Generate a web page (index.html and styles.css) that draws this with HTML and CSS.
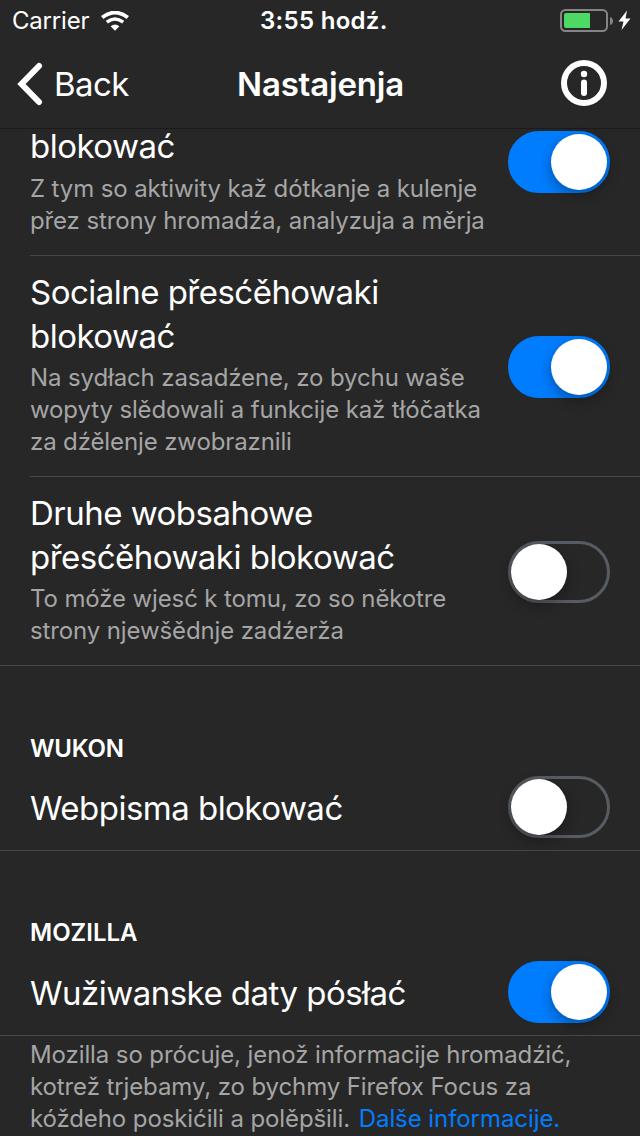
FILE: index.html
```html
<!DOCTYPE html>
<html lang="hsb">
<head>
<meta charset="utf-8">
<title>Nastajenja</title>
<link rel="stylesheet" href="styles.css">
</head>
<body>
<header class="top">
  <div class="status">
    <div class="carrier"><span class="carrier-name">Carrier</span>
      <svg class="wifi" width="28" height="20" viewBox="0 0 28 20" fill="none" stroke="#fff"><path d="M1.200 6.600Q14-3.400 26.800 6.600" stroke-width="3.800"/><path d="M5.800 11.200Q14 4.800 22.200 11.200" stroke-width="3.400"/><path d="M9.600 15.300Q14 11.700 18.400 15.300L14 19.800Z" fill="#fff" stroke="none"/></svg>
    </div>
    <span class="clock">3:55 hodź.</span>
    <svg class="battery" width="72" height="24" viewBox="0 0 72 24"><rect x="1" y="1" width="46" height="21" rx="4.500" fill="none" stroke="#858585" stroke-width="2"/><path d="M50 8q3 1 3 4t-3 4z" fill="#858585"/><path d="M6 4H30V19H6Q4 19 4 17V6Q4 4 6 4Z" fill="#4cd964"/><path d="M67 1.500L58.500 12.500h5l-2 8.500 9-11.500h-5z" fill="#fff"/></svg>
  </div>
  <nav class="nav">
    <div class="back"><svg width="26" height="44" viewBox="0 0 26 44" fill="none" stroke="#fff" stroke-width="6" stroke-linecap="round"><path d="M22 4L4.500 22l17.500 18"/></svg><span>Back</span></div>
    <h1 class="title">Nastajenja</h1>
    <svg class="info" width="48" height="48" viewBox="0 0 48 48"><circle cx="24" cy="24" r="20" fill="none" stroke="#fff" stroke-width="6"/><circle cx="24" cy="15" r="3.200" fill="#fff"/><rect x="21" y="20.500" width="6" height="16.500" rx="3" fill="#fff"/></svg>
  </nav>
</header>
<main>
  <section class="row row-a">
    <div class="copy"><h2>blokować</h2><p>Z tym so aktiwity kaž dótkanje a kulenje<br>přez strony hromadźa, analyzuja a měrja</p></div>
    <span class="switch on"></span>
  </section>
  <section class="row row-b">
    <div class="copy"><h2>Socialne přesćěhowaki<br>blokować</h2><p>Na sydłach zasadźene, zo bychu waše<br>wopyty slědowali a funkcije kaž tłóčatka<br>za dźělenje zwobraznili</p></div>
    <span class="switch on"></span>
  </section>
  <section class="row row-c">
    <div class="copy"><h2>Druhe wobsahowe<br>přesćěhowaki blokować</h2><p>To móže wjesć k tomu, zo so někotre<br>strony njewšědnje zadźerža</p></div>
    <span class="switch"></span>
  </section>
  <h3 class="wukon">WUKON</h3>
  <section class="row single"><h2>Webpisma blokować</h2><span class="switch"></span></section>
  <h3 class="mozilla">MOZILLA</h3>
  <section class="row single"><h2>Wužiwanske daty pósłać</h2><span class="switch on"></span></section>
  <p class="foot">Mozilla so prócuje, jenož informacije hromadźić,<br>kotrež trjebamy, zo bychmy Firefox Focus za<br>kóždeho poskićili a polěpšili. <a>Dalše informacije.</a></p>
</main>
</body>
</html>
```
FILE: styles.css
```css
* { box-sizing: border-box; margin: 0; }
body { width: 640px; height: 1136px; overflow: hidden; background: #272727; color: #fff; font-family: Inter, "Liberation Sans", sans-serif; }
.top { height: 129px; border-bottom: 1px solid #1b1b1b; }
.status { height: 41px; display: grid; grid-template-columns: 248px 144px 1fr; align-items: center; padding: 0 8px 0 12px; font-size: 24px; }
.carrier { display: flex; align-items: center; gap: 12px; }
.carrier-name { letter-spacing: -.2px; }
.clock { font-weight: 600; letter-spacing: .3px; white-space: nowrap; }
.battery { justify-self: end; margin-top: 1px; }
.nav { height: 86px; display: grid; grid-template-columns: 220px 1fr 188px; align-items: center; padding: 0 32px 0 17px; font-size: 33px; }
.back { display: flex; align-items: center; gap: 11px; letter-spacing: -.6px; }
.title { font-size: 33px; font-weight: 600; letter-spacing: -.18px; white-space: nowrap; }
.info { justify-self: end; margin-top: -2px; }
.row { display: flex; justify-content: space-between; align-items: center; padding-right: 30px; border-bottom: 1px solid #474747; }
.row-a, .row-b { margin-left: 30px; }
.row-a { height: 127px; align-items: flex-start; }
.row-b { height: 221px; }
.row-c { height: 189px; padding-left: 30px; }
h2 { font-size: 33px; line-height: 44px; font-weight: 400; letter-spacing: -.52px; white-space: nowrap; }
p { font-size: 24px; line-height: 32px; color: #a5a5a5; letter-spacing: -.12px; white-space: nowrap; }
.copy h2 { margin: -4px 0 4px; }
.row-a h2 { margin: -5px 0 5px; }
.row-a .switch, .row-b .switch, .row-c .switch { margin-top: 2px; }
.switch { flex: none; width: 102px; height: 62px; border-radius: 31px; border: 3px solid #575c62; display: flex; align-items: center; }
.switch::before { content: ""; width: 56px; height: 56px; border-radius: 50%; background: #fff; box-shadow: 0 5px 14px #0005; }
.switch.on { background: #007dff; border-color: #007dff; justify-content: flex-end; }
h3 { height: 100px; padding: 68px 30px 0; font-size: 24px; line-height: 30px; font-weight: 600; }
.wukon { letter-spacing: -.2px; }
.mozilla { padding-top: 67px; }
.single { height: 85px; padding-left: 30px; }
.single h2 { margin-top: -1px; }
.single .switch { margin-top: -2px; }
.foot { padding: 3px 30px; letter-spacing: -.1px; }
.foot a { color: #007dff; letter-spacing: -.07px; margin-left: 2px; }
```
